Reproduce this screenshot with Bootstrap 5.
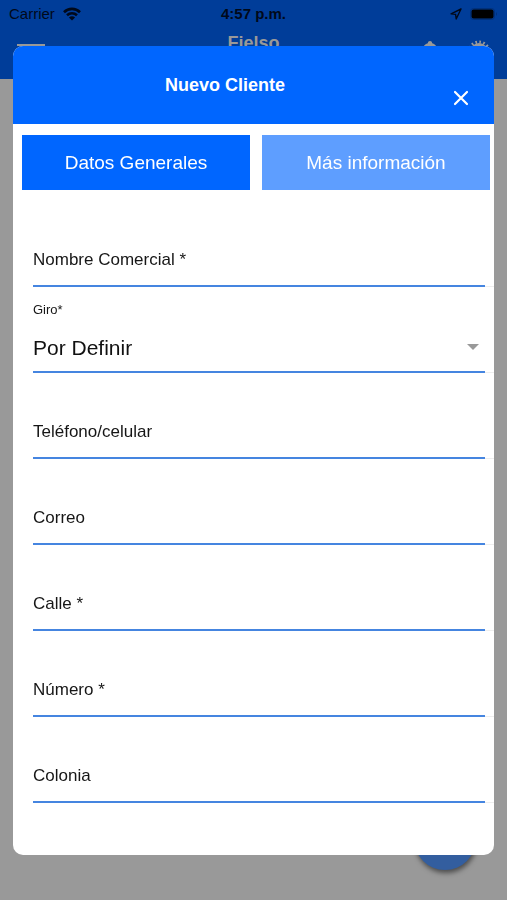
<!DOCTYPE html>
<html lang="es">
<head>
<meta charset="utf-8">
<meta name="viewport" content="width=device-width, initial-scale=1">
<title>Nuevo Cliente</title>
<link href="https://cdn.jsdelivr.net/npm/bootstrap@5.3.0/dist/css/bootstrap.min.css" rel="stylesheet">
<style>
  body { font-family: "Liberation Sans", Arial, sans-serif; background: #999; color: #161616; }
  .app-page { height: 100vh; }
  .app-top { background: #003d99; height: 79px; }
  .status-bar { height: 28px; padding: 0 9px; font-size: 15px; color: #00091a; display: grid; grid-template-columns: 1fr auto 1fr; }
  .app-title { font-size: 18px; line-height: 30px; color: #999; }
  .app-tools { display: grid; grid-template-columns: 1fr auto 1fr; padding: 0 16px; }
  .app-tools svg { margin-top: 12px; }
  .app-tools .menu-icon { margin-top: 16px; }
  .fab { right: 31px; bottom: 30px; width: 62px; height: 62px; background: #335e9f; box-shadow: 1px 3px 5px rgba(0,0,0,.5); }
  .sheet-layer { padding: 46px 13px 45px; }
  .sheet { border-radius: 10px; background: #fff; }
  .sheet-head { background: #0066ff; color: #fff; height: 78px; display: grid; grid-template-columns: 1fr 48px; padding-right: 9px; }
  .sheet-head h1 { font-size: 18px; line-height: 78px; }
  .close-btn, .close-btn:hover { width: 48px; height: 48px; margin-top: 28px; color: #fff; }
  .tabs { gap: 12px; padding: 11px 4px 0 9px; }
  .tab-btn { background: #5e9eff; color: #fff; font-size: 19px; line-height: 24px; padding: 16px 0 15px; border-radius: 0; }
  .tab-btn.active { background: #0066ff; color: #fff; }
  .tab-btn:hover { background: #4a92ff; color: #fff; }
  .sheet-body { min-height: 0; scrollbar-width: none; padding-top: 11px; }
  .item { height: 86px; margin-left: 20px; border-bottom: 1px solid #eee; }
  .entry { height: 86px; margin-right: 9px; border-bottom: 2px solid #4585e0; }
  .entry > * { grid-area: 1 / 1; }
  .entry label { font-size: 17px; line-height: 20px; padding-top: 49px; pointer-events: none; z-index: 1; }
  .entry input, .entry select { border: 0; background: transparent; padding: 38px 0 0; outline: 0; border-radius: 0; font-size: 17px; color: #111; width: 100%; }
  .entry input:focus + label { color: #0066ff; }
  .entry select { appearance: none; font-size: 21px; line-height: 24px; padding: 37px 20px 0 0; }
  .entry .small-label { font-size: 13px; line-height: 16px; padding-top: 15px; }
  .caret { justify-self: end; margin: 57px 6px 0 0; pointer-events: none; }
</style>
<script defer src="https://cdn.jsdelivr.net/npm/bootstrap@5.3.0/dist/js/bootstrap.bundle.min.js"></script>
</head>
<body class="overflow-hidden">
<div class="app-page">
  <header class="app-top">
    <div class="status-bar align-items-center">
      <div class="d-flex align-items-center gap-2">
        <span>Carrier</span>
        <svg width="18" height="14" viewBox="0 0 18 14" fill="none" stroke="currentColor" stroke-width="2.6" aria-hidden="true"><path d="M1 5.2C5.5.8 12.500.8 17 5.200M4 8.300c2.800-2.700 7.200-2.700 10 0"/><path d="M9 13.500 5.900 10.500c1.700-1.600 4.500-1.600 6.200 0z" fill="currentColor" stroke="none"/></svg>
      </div>
      <strong>4:57 p.m.</strong>
      <div class="d-flex justify-content-end align-items-center gap-2">
        <svg width="12" height="12" viewBox="0 0 12 12" fill="none" stroke="currentColor" stroke-width="1.400" stroke-linejoin="round" aria-hidden="true"><path d="M11 1 1 5.800l4.600.6.600 4.600z"/></svg>
        <svg width="28" height="12" viewBox="0 0 28 12" aria-hidden="true"><rect x=".5" y=".5" width="24" height="11" rx="3" fill="none" stroke="#00307a"/><rect x="1.500" y="1.500" width="22" height="9" rx="2" fill="#000"/><path d="M26 4q2 2 0 4z" fill="#00307a"/></svg>
      </div>
    </div>
    <div class="app-tools">
      <svg class="menu-icon" width="30" height="22" viewBox="0 0 30 22" aria-hidden="true"><path d="M1 1h28M1 10h28M1 19h28" stroke="#999" stroke-width="2"/></svg>
      <strong class="app-title">Fielso</strong>
      <div class="d-flex justify-content-end gap-4">
        <svg width="26" height="26" viewBox="0 0 26 26" aria-hidden="true"><path d="M13 1c1.300 0 2 .8 2.200 2.300C19 4.500 21 8 21 12v5l2 3H3l2-3v-5c0-4 2-7.500 5.800-8.700C11 1.800 11.700 1 13 1z" fill="#999"/></svg>
        <svg width="24" height="24" viewBox="0 0 24 24" fill="none" stroke="#999" aria-hidden="true"><circle cx="12" cy="12" r="7.500" stroke-width="3"/><circle cx="12" cy="12" r="10" stroke-width="3" stroke-dasharray="1.600 2.330"/></svg>
      </div>
    </div>
  </header>
  <div class="fab position-fixed rounded-circle"></div>
</div>

<div class="sheet-layer position-fixed top-0 start-0 w-100 h-100">
  <main class="sheet d-flex flex-column h-100 overflow-hidden" role="dialog" aria-labelledby="sheet-title">
    <header class="sheet-head flex-shrink-0">
      <h1 id="sheet-title" class="m-0 fw-bold text-center">Nuevo Cliente</h1>
      <button type="button" class="close-btn btn p-0 border-0 d-flex align-items-center justify-content-center" aria-label="Cerrar">
        <svg width="16" height="16" viewBox="0 0 16 16" fill="none" stroke="currentColor" stroke-width="2.200" stroke-linecap="round"><path d="M2 2l12 12M14 2 2 14"/></svg>
      </button>
    </header>
    <div class="tabs d-flex flex-shrink-0">
      <button type="button" class="tab-btn btn active border-0 w-100">Datos Generales</button>
      <button type="button" class="tab-btn btn border-0 w-100">Más información</button>
    </div>
    <form class="sheet-body flex-grow-1 overflow-auto">
      <div class="item"><div class="entry d-grid"><input id="nombre" type="text"><label for="nombre">Nombre Comercial *</label></div></div>
      <div class="item"><div class="entry d-grid">
        <select id="giro"><option>Por Definir</option></select>
        <label class="small-label" for="giro">Giro*</label>
        <svg class="caret" width="12" height="6" viewBox="0 0 12 6" aria-hidden="true"><path d="M0 0h12L6 6z" fill="#999"/></svg>
      </div></div>
      <div class="item"><div class="entry d-grid"><input id="telefono" type="tel"><label for="telefono">Teléfono/celular</label></div></div>
      <div class="item"><div class="entry d-grid"><input id="correo" type="email"><label for="correo">Correo</label></div></div>
      <div class="item"><div class="entry d-grid"><input id="calle" type="text"><label for="calle">Calle *</label></div></div>
      <div class="item"><div class="entry d-grid"><input id="numero" type="text"><label for="numero">Número *</label></div></div>
      <div class="item"><div class="entry d-grid"><input id="colonia" type="text"><label for="colonia">Colonia</label></div></div>
      <div class="item"><div class="entry d-grid"><input id="codigo" type="text"><label for="codigo">Código</label></div></div>
    </form>
  </main>
</div>
</body>
</html>
